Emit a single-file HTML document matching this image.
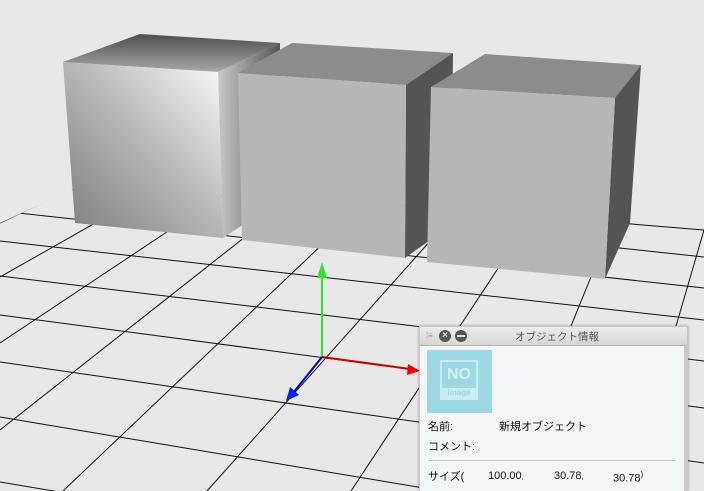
<!DOCTYPE html>
<html><head><meta charset="utf-8"><style>
body{margin:0;width:704px;height:491px;overflow:hidden;background:#e8e8e8;font-family:"Liberation Sans","Noto Sans CJK JP",sans-serif;position:relative}
svg{position:absolute;left:0;top:0}
.panel{position:absolute;left:419px;top:326px;width:269px;height:165px;background:#c8c8c8;box-shadow:0 0 3px rgba(0,0,0,.35)}
.tb{position:absolute;left:1px;top:1px;right:1px;height:18px;background:linear-gradient(#ececec,#d6d6d6);border-bottom:1px solid #b5b5b5}
.tb .t{position:absolute;left:95px;top:2px;font-size:10.5px;color:#555}
.cnt{position:absolute;left:1px;top:20px;right:4px;bottom:0;background:#f3f6fb}
.txt{position:absolute;font-size:11px;color:#111;white-space:nowrap}
</style></head><body>
<svg width="704" height="491" viewBox="0 0 704 491">
<defs>
<linearGradient id="f1" x1="1" y1="0" x2="0" y2="1"><stop offset="0" stop-color="#fbfbfb"/><stop offset=".5" stop-color="#b4b4b4"/><stop offset="1" stop-color="#7c7c7c"/></linearGradient>
<linearGradient id="t1" x1="0" y1="0" x2="0" y2="1"><stop offset="0" stop-color="#4e4e4e"/><stop offset="1" stop-color="#a8a8a8"/></linearGradient>
<linearGradient id="s1" x1="0" y1="0" x2="1" y2="0"><stop offset="0" stop-color="#c8c8c8"/><stop offset="1" stop-color="#555"/></linearGradient>
<clipPath id="gc"><polygon points="0,223 486,0 704,0 704,491 0,491"/></clipPath>
</defs>
<g stroke="#111" stroke-width="1" fill="none" clip-path="url(#gc)">
<line x1="0" y1="172" x2="704" y2="230"/>
<line x1="0" y1="182" x2="704" y2="257"/>
<line x1="0" y1="211" x2="704" y2="288"/>
<line x1="0" y1="241" x2="704" y2="320"/>
<line x1="0" y1="276" x2="704" y2="361"/>
<line x1="0" y1="315" x2="704" y2="408"/>
<line x1="0" y1="362" x2="704" y2="463"/>
<line x1="0" y1="417" x2="704" y2="535"/>
<line x1="0" y1="482" x2="704" y2="600"/>
<line x1="0" y1="223" x2="90" y2="180"/>
<line x1="0" y1="277" x2="180" y2="175"/>
<line x1="0" y1="343" x2="260" y2="170"/>
<line x1="0" y1="430" x2="330" y2="170"/>
<line x1="63" y1="491" x2="390" y2="180"/>
<line x1="207" y1="491" x2="440" y2="230"/>
<line x1="351" y1="491" x2="530" y2="220"/>
<line x1="504" y1="491" x2="610" y2="230"/>
<line x1="628" y1="491" x2="704" y2="230"/>
</g>
<polygon points="63,62 140,34 280,43 218,72" fill="url(#t1)"/>
<polygon points="218,72 280,43 280,200 223,238" fill="url(#s1)"/>
<polygon points="63,62 218,72 223,238 75,223" fill="url(#f1)"/>
<polygon points="238,73 292,43 453,53 406,85" fill="#8c8c8c"/>
<polygon points="406,85 453,53 451,225 405,258" fill="#545454"/>
<polygon points="238,73 406,85 405,258 242,240" fill="#b6b6b6"/>
<polygon points="431,87 485,54 641,65 615,98" fill="#8c8c8c"/>
<polygon points="615,98 641,65 630,223 605,279" fill="#545454"/>
<polygon points="431,87 615,98 605,279 427,262" fill="#b6b6b6"/>
<line x1="322" y1="357" x2="322" y2="272" stroke="#2ee52e" stroke-width="2"/>
<polygon points="322,262 317,278 327,278" fill="#2ee52e"/>
<line x1="322" y1="357" x2="410" y2="369" stroke="#c00" stroke-width="2"/>
<polygon points="420,371 408,364 407,375" fill="#e00"/>
<line x1="322" y1="357" x2="293" y2="393" stroke="#0000b0" stroke-width="2"/>
<polygon points="286,401 290,387 299,395" fill="#0020ff"/>
</svg>
<div class="panel">
<div class="tb">
<span style="position:absolute;left:6px;top:4px;font-size:8px;color:#999">⁞≡</span>
<span style="position:absolute;left:19px;top:3px;width:12px;height:12px;border-radius:50%;background:#555;color:#ddd;font-size:10px;line-height:12px;text-align:center;font-weight:bold">×</span>
<span style="position:absolute;left:35px;top:3px;width:12px;height:12px;border-radius:50%;background:#555"><span style="position:absolute;left:2px;top:5px;width:8px;height:2px;background:#ddd"></span></span>
<span class="t">オブジェクト情報</span>
</div>
<div class="cnt">
<div style="position:absolute;left:7px;top:4px;width:65px;height:63px;background:#9dd8e3">
<div style="position:absolute;left:13px;top:10px;width:38px;height:40px;border:2px solid #c8ecf2;box-sizing:border-box;color:#d4f0f5;font-weight:bold;font-size:16px;text-align:center;line-height:26px">NO<div style="position:absolute;left:0;right:0;bottom:0;height:10px;background:#c8ecf2;color:#9dd8e3;font-size:8px;line-height:10px">image</div></div>
</div>
<div class="txt" style="left:8px;top:72px">名前:</div>
<div class="txt" style="left:79px;top:72px">新規オブジェクト</div>
<div class="txt" style="left:8px;top:92px">コメント:</div>
<div style="position:absolute;left:8px;right:8px;top:114px;height:1px;background:#ccc"></div>
<div class="txt" style="left:8px;top:122px">サイズ(</div>
<div class="txt" style="left:68px;top:124px">100.00<span style="font-size:7px">,</span></div>
<div class="txt" style="left:134px;top:124px">30.78<span style="font-size:7px">,</span></div>
<div class="txt" style="left:193px;top:124px">30.78<sup style="font-size:8px">)</sup></div>
</div>
</div>
</body></html>
